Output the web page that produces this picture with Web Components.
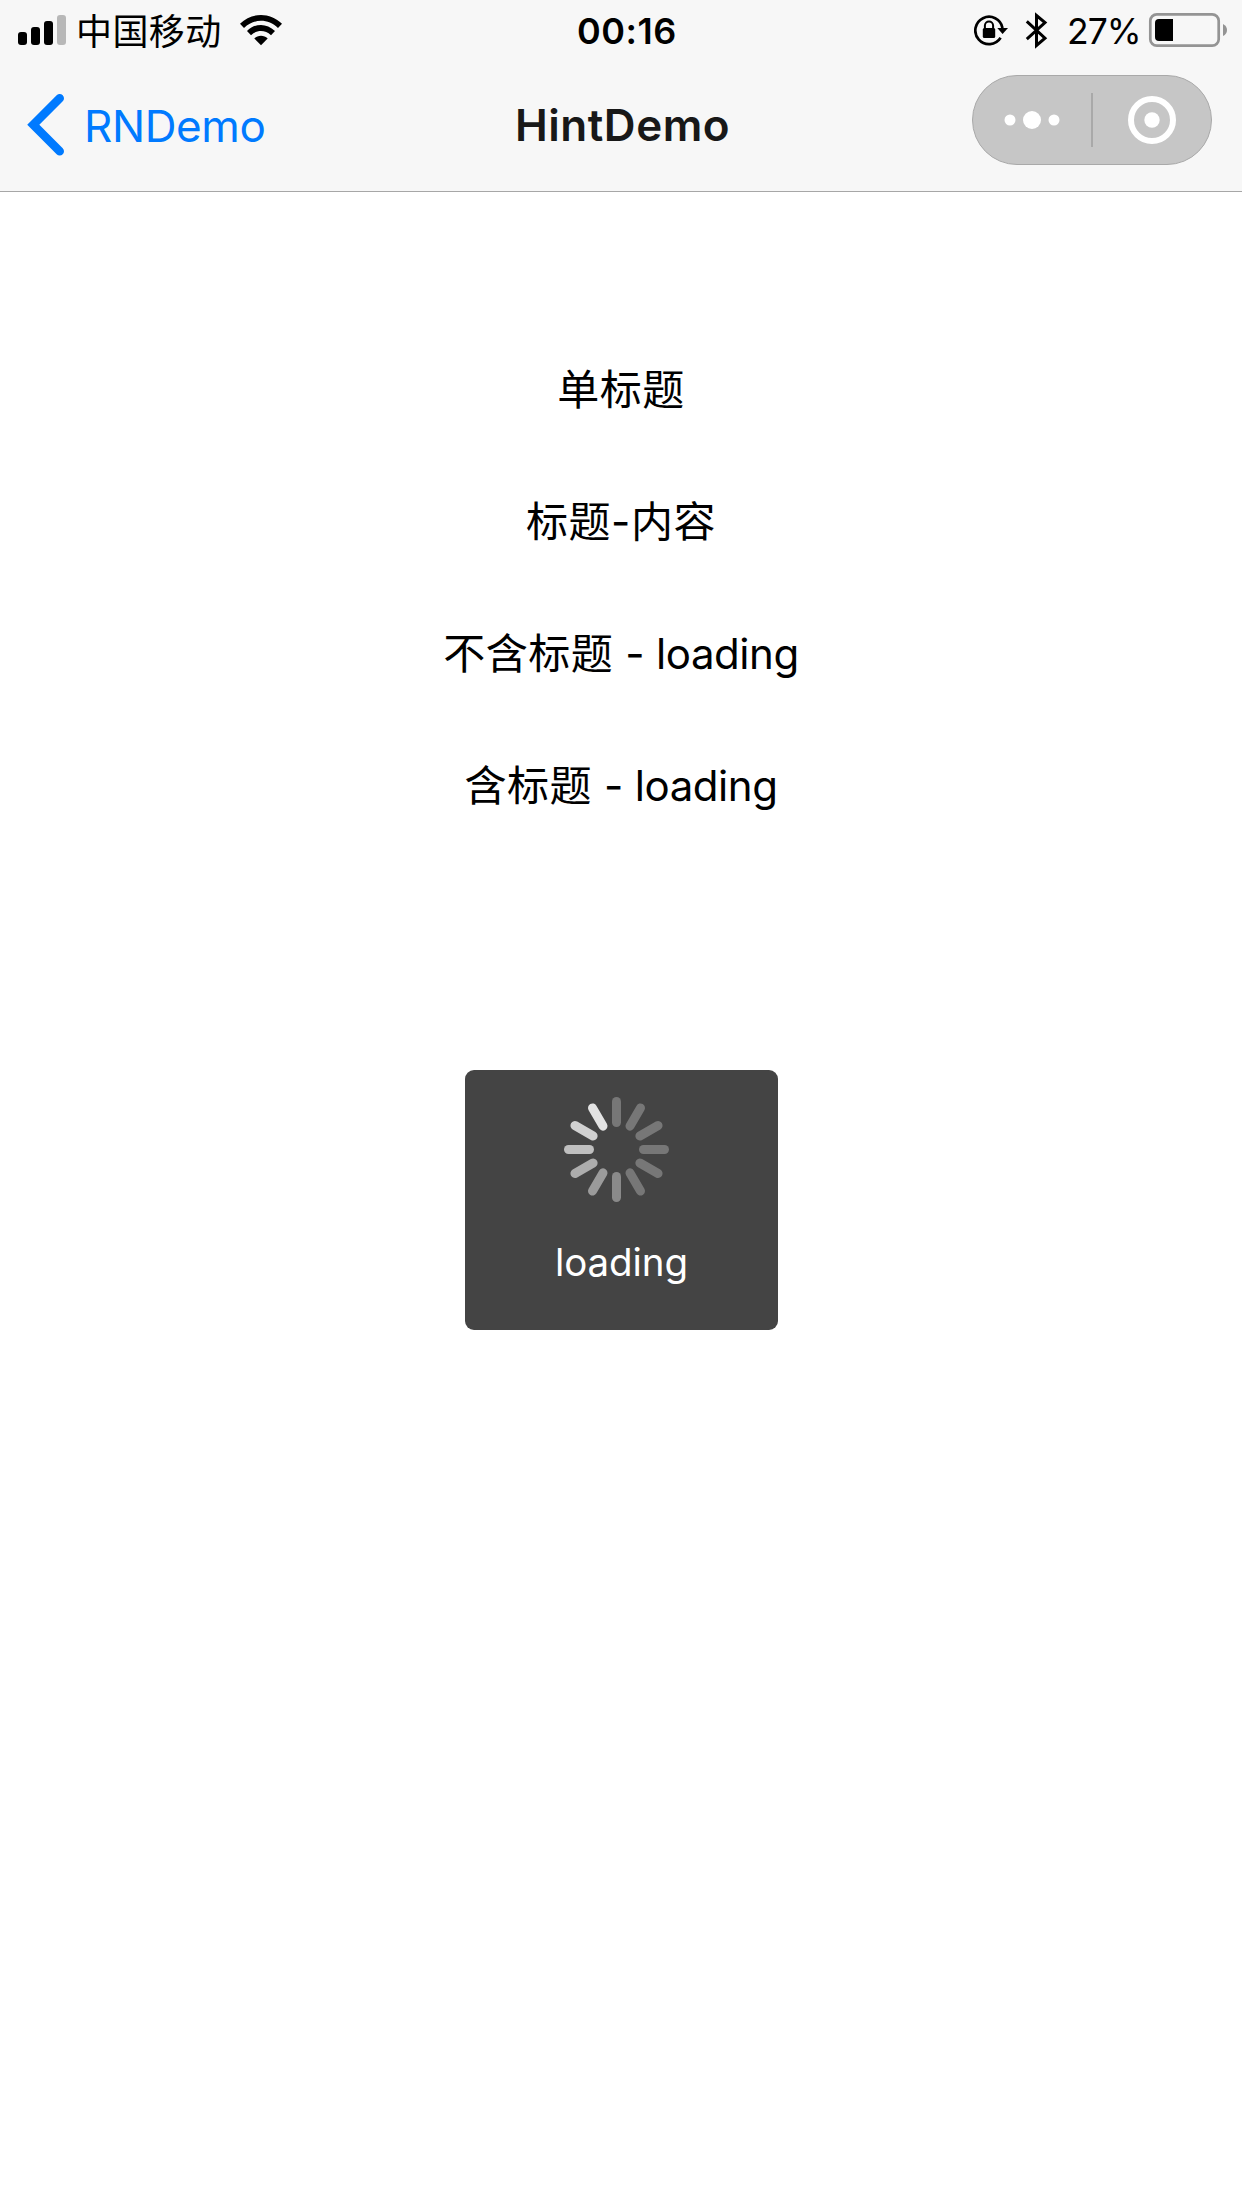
<!DOCTYPE html>
<html lang="zh-CN">
<head>
<meta charset="utf-8">
<title>HintDemo</title>
<style>
html,body{margin:0;padding:0;background:#fff}
body{font-family:Inter,"Noto Sans CJK SC",sans-serif;color:#000}
</style>
</head>
<body>
<hint-app></hint-app>
<script>
const define = (name, html) => {
  const t = document.createElement('template');
  t.innerHTML = html;
  customElements.define(name, class extends HTMLElement {
    constructor() {
      super();
      this.attachShadow({ mode: 'open' }).append(t.content.cloneNode(true));
    }
  });
};

define('status-bar', `
<style>
:host{display:flex;height:60px;font-size:36px;white-space:nowrap}
svg{display:block;flex:none}
span{line-height:62px}
.left{display:flex;width:577px;flex:none}
.carrier{width:164px;padding-left:1px;letter-spacing:.4px;line-height:64px}
.time{width:397px;flex:none;font-weight:600;letter-spacing:.5px}
.pct{width:79px;padding-left:1px;font-size:35.5px;letter-spacing:-1px;line-height:63px}
</style>
<div class="left">
<svg width="75" height="60"><rect x="18" y="32" width="9" height="13" rx="3"/><rect x="31" y="27" width="9" height="18" rx="3"/><rect x="44" y="21" width="9" height="24" rx="3"/><rect x="57" y="15" width="9" height="30" rx="3" fill="#b8b8b8"/></svg>
<span class="carrier">中国移动</span>
<svg width="44" height="60" viewBox="240 0 44 60"><path d="M240 23.8C252 12 270 12 282 23.8L278 28C268 18.4 254 18.4 244 28Z"/><path d="M247 31.1C255.500 22.800 266.500 22.800 275 31.1L271 35.200C265 29.600 257 29.600 251 35.200Z"/><path d="M254.300 38.500C258 34.800 264 34.800 267.700 38.500L261 45.200Z"/></svg>
</div>
<span class="time">00:16</span>
<svg width="92" height="60" viewBox="974 0 92 60">
<path d="M1000.6 37.800A13.700 13.700 0 1 1 1002.500 28" fill="none" stroke="#000" stroke-width="2.700"/>
<path d="M997.300 28H1008L1002.600 34Z"/>
<rect x="982.800" y="28" width="12.400" height="10" rx="1.500"/>
<path d="M984.900 29V25.500A4.100 4.100 0 0 1 993.100 25.500V29" fill="none" stroke="#000" stroke-width="2"/>
<path d="M1026.800 21.300L1045 38.100L1036.500 45.500V15.500L1045 22.500L1026.800 39.200" fill="none" stroke="#000" stroke-width="3" stroke-miterlimit="6"/>
</svg>
<span class="pct">27%</span>
<svg width="90" height="60" viewBox="1146 0 90 60"><rect x="1150.300" y="14.300" width="68.400" height="31.400" rx="6.500" fill="none" stroke="#949494" stroke-width="2.700"/><path d="M1173 19H1159Q1155 19 1155 23V37Q1155 41 1159 41H1173Z"/><path d="M1223 24Q1227 26 1227 30T1223 36Z" fill="#949494"/></svg>
`);

define('capsule-menu', `
<style>
:host{display:block;box-sizing:border-box;width:240px;height:90px;border:1px solid #a9a9a9;border-radius:45px;background:#c6c6c6}
svg{display:block}
</style>
<svg width="238" height="88" viewBox="973 76 238 88" fill="#fff"><circle cx="1010" cy="120" r="5.500"/><circle cx="1032" cy="120" r="9"/><circle cx="1054" cy="120" r="5.500"/><rect x="1091" y="93" width="2" height="54" fill="#a9a9a9"/><circle cx="1152" cy="120" r="21" fill="none" stroke="#fff" stroke-width="6"/><circle cx="1152" cy="120" r="7.700"/></svg>
`);

define('nav-bar', `
<style>
:host{display:flex;height:131px;border-bottom:1px solid #a7a7a7;font-size:44px;white-space:nowrap}
svg{display:block;flex:none}
.back{display:flex;width:514px;flex:none;color:#007aff}
.label{line-height:132px;letter-spacing:-.4px}
.title{width:457px;padding-left:1px;flex:none;font-weight:600;line-height:130px;letter-spacing:.5px;color:#181818}
capsule-menu{margin-top:15px;flex:none}
</style>
<div class="back"><svg width="84" height="131" viewBox="0 60 84 131"><path d="M59.700 98.300L33.300 124.800L59.700 151.300" fill="none" stroke="#007aff" stroke-width="8.600" stroke-linecap="round" stroke-linejoin="miter"/></svg><span class="label"><slot name="back"></slot></span></div>
<span class="title"><slot name="title"></slot></span>
<capsule-menu></capsule-menu>
`);

define('hint-item', `
<style>
:host{display:block;height:132px;line-height:132px;font-size:42px;letter-spacing:.5px;text-align:center;white-space:nowrap}
::slotted(span){letter-spacing:-.45px;word-spacing:.6px}
</style><slot></slot>`);

define('activity-spinner', `
<style>:host{display:block;width:105px;height:105px}svg{display:block}</style>
<svg width="105" height="105" viewBox="-52.5 -52.5 105 105">${
  ['#777','#777','#777','#777','#777','#777','#8a8a8a','#9b9b9b','#adadad','#bfbfbf','#d1d1d1','#e3e3e3']
    .map((c, i) => `<rect x="-4.5" y="-52.5" width="9" height="30" rx="4.5" fill="${c}" transform="rotate(${i * 30})"/>`).join('')
}</svg>`);

define('loading-toast', `
<style>
:host{display:flex;flex-direction:column;align-items:center;box-sizing:border-box;width:313px;height:260px;padding-top:27px;border-radius:9px;background:#444;color:#fff}
activity-spinner{margin-right:10px}
.text{margin-top:35px;line-height:50px;font-size:38.5px;letter-spacing:-.1px}
</style>
<activity-spinner></activity-spinner><span class="text"><slot></slot></span>`);

define('hint-app', `
<style>
:host{display:block;width:1242px;height:2208px;background:#fff;overflow:hidden}
header{background:#f7f7f7}
main{padding-top:132px}
loading-toast{margin:218px 0 0 465px}
</style>
<header>
<status-bar></status-bar>
<nav-bar><span slot="back">RNDemo</span><span slot="title">HintDemo</span></nav-bar>
</header>
<main>
<hint-item>单标题</hint-item>
<hint-item>标题-内容</hint-item>
<hint-item>不含标题<span> - loading</span></hint-item>
<hint-item>含标题<span> - loading</span></hint-item>
<loading-toast>loading</loading-toast>
</main>`);
</script>
</body>
</html>
